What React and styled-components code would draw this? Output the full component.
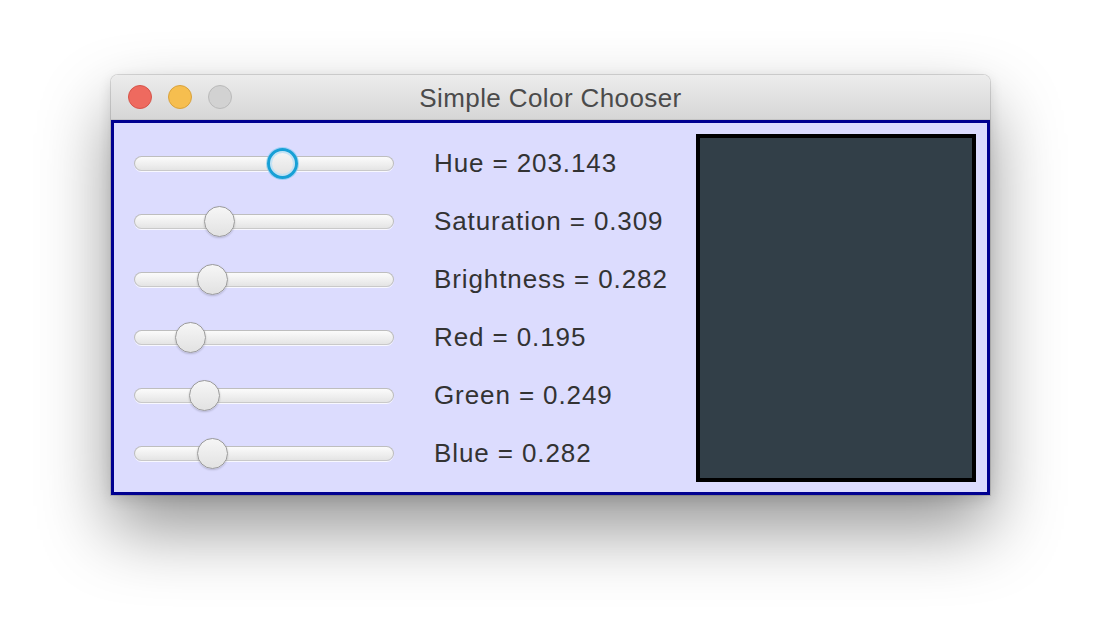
import React from "react";
import styled, { createGlobalStyle } from "styled-components";

const Global = createGlobalStyle`
  html, body { margin: 0; padding: 0; background: #ffffff; }
  body { font-family: "Liberation Sans", Arial, sans-serif; }
`;

const Page = styled.div`
  width: 1102px;
  height: 644px;
  padding: 75px 0 0 111px;
  box-sizing: border-box;
  overflow: hidden;
`;

const Window = styled.div`
  width: 879px;
  display: flex;
  flex-direction: column;
  border-radius: 7px 7px 0 0;
  box-shadow: 0 34px 70px rgba(0, 0, 0, 0.42), 0 4px 14px rgba(0, 0, 0, 0.12),
    0 0 0 1px rgba(0, 0, 0, 0.12);
`;

const TitleBar = styled.div`
  position: relative;
  height: 45px;
  display: flex;
  align-items: center;
  justify-content: center;
  border-radius: 7px 7px 0 0;
  background: linear-gradient(#ececec, #d6d6d6);
  border-bottom: 1px solid #c4c4c4;
  box-sizing: border-box;
`;

const Lights = styled.div`
  position: absolute;
  left: 17px;
  top: 10px;
  display: flex;
  gap: 16px;
`;

const Light = styled.div`
  width: 24px;
  height: 24px;
  border-radius: 50%;
  box-sizing: border-box;
  background: ${(p) => p.$bg};
  border: 1px solid ${(p) => p.$bd};
`;

const Title = styled.div`
  font-size: 26px;
  color: #4b4b4b;
  letter-spacing: 0.4px;
  margin-top: 2px;
`;

const Content = styled.div`
  border: 3px solid #000090;
  background: #dcdcfe;
  display: grid;
  grid-template-columns: 260px 40px 262px 280px;
  padding: 11px 10px 10px 20px;
`;

const Rows = styled.div`
  grid-column: 1 / 4;
  display: grid;
  grid-template-columns: 260px 40px 262px;
  grid-auto-rows: 58px;
`;

const Track = styled.div`
  position: relative;
  align-self: center;
  height: 15px;
  border-radius: 8px;
  box-sizing: border-box;
  border: 1.5px solid #bebebe;
  border-bottom-color: #c9c9c9;
  background: linear-gradient(#fbfbfb, #eeeeee 60%, #e4e4e4);
  box-shadow: 0 1px 0 rgba(255, 255, 255, 0.8);
`;

const Thumb = styled.div`
  position: absolute;
  top: 50%;
  width: 31px;
  height: 31px;
  margin-left: -15.5px;
  margin-top: -15.5px;
  border-radius: 50%;
  box-sizing: border-box;
  background: linear-gradient(#f6f6f6, #e2e2e2);
  border: ${(p) => (p.$focus ? "3px solid #17a0d6" : "1.5px solid #9a9a9a")};
  box-shadow: ${(p) =>
    p.$focus
      ? "0 0 0 1px rgba(120, 200, 240, 0.6), inset 0 0 0 2px rgba(190, 225, 245, 0.9)"
      : "0 1px 2px rgba(0, 0, 0, 0.18)"};
`;

const Label = styled.div`
  grid-column: 3;
  align-self: center;
  font-size: 26px;
  letter-spacing: 0.9px;
  color: #333333;
  white-space: nowrap;
`;

const Swatch = styled.div`
  grid-column: 4;
  border: 4px solid #000000;
  background: ${(p) => p.$color};
  height: 348px;
  box-sizing: border-box;
`;

const rows = [
  { name: "Hue", frac: 203.143 / 360, focus: true, text: "203.143" },
  { name: "Saturation", frac: 0.309, text: "0.309" },
  { name: "Brightness", frac: 0.282, text: "0.282" },
  { name: "Red", frac: 0.195, text: "0.195" },
  { name: "Green", frac: 0.249, text: "0.249" },
  { name: "Blue", frac: 0.282, text: "0.282" },
];

export default function App() {
  return (
    <Page>
      <Global />
      <Window>
        <TitleBar>
          <Lights>
            <Light $bg="#ee6a5f" $bd="#d6544a" />
            <Light $bg="#f6be4f" $bd="#d9a23c" />
            <Light $bg="#d2d2d2" $bd="#bababa" />
          </Lights>
          <Title>Simple Color Chooser</Title>
        </TitleBar>
        <Content>
          <Rows>
            {rows.map((r) => (
              <React.Fragment key={r.name}>
                <Track>
                  <Thumb $focus={r.focus} style={{ left: `${7.4 + r.frac * 249}px` }} />
                </Track>
                <Label>
                  {r.name} = {r.text}
                </Label>
              </React.Fragment>
            ))}
          </Rows>
          <Swatch $color="rgb(50, 63, 72)" />
        </Content>
      </Window>
    </Page>
  );
}
